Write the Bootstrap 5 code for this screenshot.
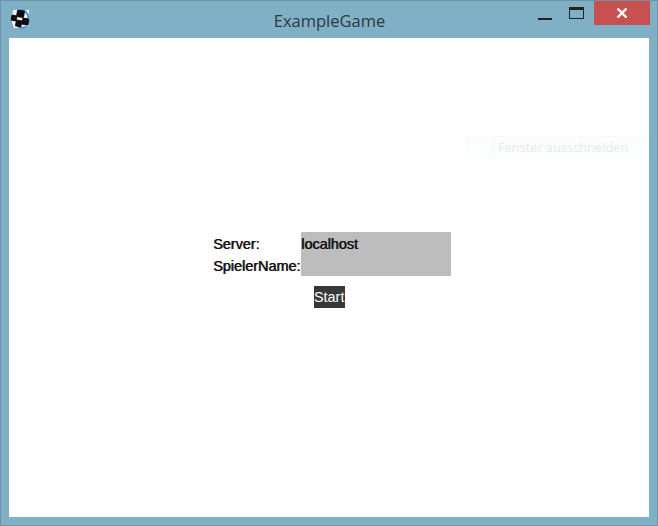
<!DOCTYPE html>
<html lang="de">
<head>
<meta charset="utf-8">
<title>ExampleGame</title>
<link rel="stylesheet" href="https://cdn.jsdelivr.net/npm/bootstrap@5.3.0/dist/css/bootstrap.min.css">
<style>
html,body{width:658px;height:526px;margin:0;overflow:hidden;background:#7fb0c5}
.win-frame{width:658px;height:526px;background:#7fb0c5;border:1px solid #6b94a9;position:relative}
.win-bar{height:37px;padding-left:9px}
.win-title{position:absolute;left:0;right:0;top:9px;text-align:center;padding-left:1px;font:16.5px/21px "Open Sans",sans-serif;color:#2b3a40}
.win-btn-min{width:14px;height:2px;background:#222;margin-right:17px;margin-top:17px}
.win-btn-max{width:15px;height:12px;border:1px solid #222;border-top-width:3px;margin-right:10px;margin-top:6px}
.win-btn-close{width:56px;height:24px;background:#c75050;margin-right:7px}
.win-client{width:640px;height:479px;margin-left:8px;background:#fff;padding:194px 0 0 204px;position:relative}
.form-wrap{font:14.4px/22px "Liberation Sans",sans-serif;color:#111;text-shadow:.7px 0 .5px rgba(0,0,0,.8)}
.lbl-col{width:88px;white-space:nowrap}
.lbl-col div,.val-text{padding-top:1px;margin-bottom:-1px}
.val-box{width:150px;height:44px;background:#bdbdbd}
.start-btn{width:31px;height:22px;background:#383838;color:#fff;margin:10px 0 0 101px;white-space:nowrap;overflow:hidden;text-shadow:none}
.ghost-tip{position:absolute;left:457px;top:98px;width:183px;height:22px;background:#fcfdfe;border:1px solid #f6f8fa;border-right:0;color:#e8eaec;font:12.8px/20px "Open Sans",sans-serif;padding-left:31px;white-space:nowrap;overflow:hidden}
.ghost-tip::before{content:"";position:absolute;left:26px;top:0;bottom:0;border-left:1px solid #f8f9fb}
</style>
</head>
<body>
<div class="win-frame">
  <div class="win-bar d-flex align-items-start justify-content-between">
    <svg class="mt-2" width="20" height="20" viewBox="10 9 20 20" aria-hidden="true">
      <path d="M13 10H29V26L25 28H14L12 22Z" fill="#f2f6fb"/>
      <path d="M20 10.5Q27 9 28.5 18" fill="none" stroke="#3f8fd0" stroke-width="2"/>
      <path d="M18 27Q24 29 28 25" fill="none" stroke="#3f8fd0" stroke-width="1.5"/>
      <rect x="16.5" y="10" width="8" height="7.5" rx="1.5" fill="#0c0c0c" transform="rotate(10 20 14)"/>
      <rect x="11" y="15" width="6" height="6" rx="1.5" fill="#0c0c0c" transform="rotate(10 14 18)"/>
      <rect x="22" y="18" width="7" height="7" rx="1.2" fill="#0c0c0c" transform="rotate(6 25 21)"/>
      <rect x="15.5" y="20" width="6.5" height="7" rx="1.2" fill="#0c0c0c" transform="rotate(10 19 23)"/>
    </svg>
    <div class="win-title">ExampleGame</div>
    <div class="d-flex align-items-start">
      <div class="win-btn-min"></div>
      <div class="win-btn-max"></div>
      <div class="win-btn-close d-flex align-items-center justify-content-center">
        <svg width="12" height="10" viewBox="0 0 12 10" aria-hidden="true"><path d="M1.5 .5L10.5 9.5M10.5 .5L1.5 9.5" stroke="#fff" stroke-width="2.4"/></svg>
      </div>
    </div>
  </div>
  <div class="win-client">
    <div class="form-wrap">
      <div class="d-flex">
        <div class="lbl-col"><div>Server:</div><div>SpielerName:</div></div>
        <div class="val-box"><div class="val-text">localhost</div></div>
      </div>
      <div class="start-btn">Start</div>
    </div>
    <div class="ghost-tip">Fenster ausschneiden</div>
  </div>
</div>
<script src="https://cdn.jsdelivr.net/npm/bootstrap@5.3.0/dist/js/bootstrap.bundle.min.js"></script>
</body>
</html>
